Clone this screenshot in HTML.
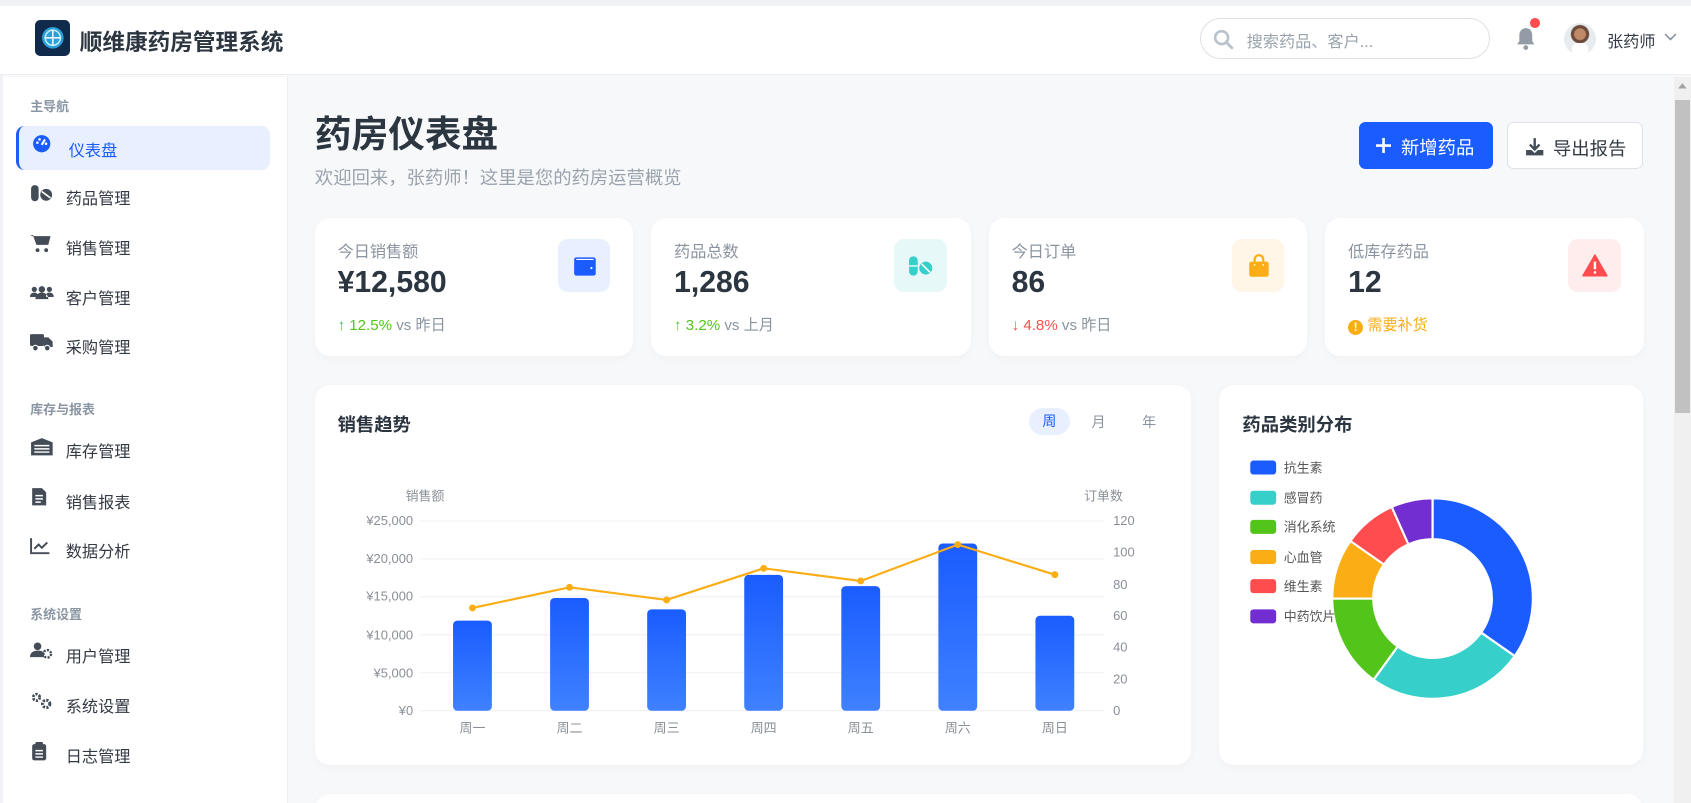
<!DOCTYPE html>
<html><head><meta charset="utf-8">
<style>
*{margin:0;padding:0;box-sizing:border-box}
html,body{width:1691px;height:803px;overflow:hidden;background:#f0f2f5}
body{font-family:"Liberation Sans","Noto Sans CJK SC",sans-serif;color:#2c3640}
#w{position:relative;width:1568px;height:745px;zoom:1.0785;overflow:hidden;background:#f7f8fa}
.a{position:absolute}
.hdr{left:0;top:6px;width:1568px;height:64px;background:#fff;border-bottom:1px solid #eceef2}
.side{left:3px;top:71px;width:264px;height:674px;background:#fff;border-right:1px solid #eceef2}
.sec{position:absolute;left:25px;font-size:12px;font-weight:bold;color:#8a96a3}
.it{position:absolute;left:13px;width:234px;height:41px;font-size:15px;color:#333a44}
.it svg{position:absolute;left:12px;top:7px}
.it span{position:absolute;left:45px;top:8px}
.act{background:#e8efff;border-left:3px solid #1a5cff;border-radius:8px;color:#1a5cff}
.card{position:absolute;background:#fff;border-radius:14px;box-shadow:0 2px 8px rgba(0,0,0,.03)}
.lab{position:absolute;left:21px;top:19px;font-size:15px;color:#8a94a0}
.val{position:absolute;left:21px;top:45px;font-size:28px;font-weight:bold;color:#2c3640}
.tr{position:absolute;left:21px;top:88px;font-size:14px;color:#8a94a0}
.ib{position:absolute;left:225px;top:20px;width:49px;height:49px;border-radius:9px}
.ib svg{position:absolute;left:13px;top:13px}
</style></head><body><div id="w">
<div class="a" style="left:0;top:0;width:1568px;height:6px;background:#f0f2f5"></div>
<div class="a" style="left:0;top:0;width:3px;height:745px;background:#f0f2f5"></div>
<div class="a hdr">
 <div class="a" style="left:32px;top:13px;width:33px;height:33px;background:#0f2a4a;border-radius:5px">
  <svg width="33" height="33"><circle cx="16.5" cy="16.5" r="10" fill="#2aa0d8"/><circle cx="16.5" cy="16.5" r="7" fill="none" stroke="#bfe6f6" stroke-width="1.5"/><path d="M16.5 9v15M9 16.5h15" stroke="#e8f6fc" stroke-width="1.5"/></svg>
 </div>
 <div class="a" style="left:74px;top:16px;font-size:21px;font-weight:bold;color:#2c3640">顺维康药房管理系统</div>
 <div class="a" style="left:1113px;top:11px;width:269px;height:38px;border:1px solid #dde1e6;border-radius:20px">
  <svg class="a" style="left:11px;top:9px" width="20" height="20"><circle cx="8" cy="8" r="6" fill="none" stroke="#b8c2cc" stroke-width="2.4"/><path d="M12.5 12.5l5 5" stroke="#b8c2cc" stroke-width="2.6" stroke-linecap="round"/></svg>
  <div class="a" style="left:42px;top:8px;font-size:15px;color:#9aa3ad">搜索药品、客户...</div>
 </div>
 <svg class="a" style="left:1405px;top:18px" width="20" height="24"><path d="M10 2c-4 0-6 3-6 7v5l-2 3h16l-2-3V9c0-4-2-7-6-7z" fill="#939ca6"/><circle cx="10" cy="20" r="2.2" fill="#939ca6"/></svg>
 <div class="a" style="left:1419px;top:11px;width:9px;height:9px;border-radius:50%;background:#ff4d4f"></div>
 <div class="a" style="left:1450px;top:15px;width:30px;height:30px;border-radius:50%;background:radial-gradient(circle at 50% 35%,#c08a6a 0 5px,#6b4a3a 6px 8px,#e8ecef 9px);overflow:hidden"><div class="a" style="left:8px;top:19px;width:14px;height:12px;background:#fff;border-radius:5px 5px 0 0"></div></div>
 <div class="a" style="left:1490px;top:20px;font-size:15px;color:#333a44">张药师</div>
 <svg class="a" style="left:1543px;top:25px" width="12" height="8"><path d="M1 1l5 5 5-5" fill="none" stroke="#8a94a0" stroke-width="1.5"/></svg>
</div>

<div class="a side">
 <div class="sec" style="top:18px">主导航</div>
 <div class="it act" style="top:46px;left:12px;width:235px"><svg width="18" height="18" style="left:12px"><circle cx="9" cy="9" r="8" fill="#1a5cff"/><path d="M9 10l3-5" stroke="#fff" stroke-width="2"/><circle cx="5" cy="8" r="1.2" fill="#fff"/><circle cx="7" cy="5" r="1.2" fill="#fff"/><circle cx="13" cy="9" r="1.2" fill="#fff"/></svg><span style="left:46px;top:10px">仪表盘</span></div>
 <div class="it" style="top:93px"><svg width="22" height="18"><rect x="1" y="1" width="7" height="15" rx="3.5" fill="#444c57"/><circle cx="15" cy="10" r="5.5" fill="#444c57"/><path d="M11 7l8 6" stroke="#fff" stroke-width="1.5"/></svg><span>药品管理</span></div>
 <div class="it" style="top:139px"><svg width="20" height="18"><path d="M0 1h3l3 9h10l2-7H5" fill="#444c57"/><path d="M3 2h16l-2 8H6z" fill="#444c57"/><circle cx="7" cy="15" r="1.8" fill="#444c57"/><circle cx="15" cy="15" r="1.8" fill="#444c57"/></svg><span>销售管理</span></div>
 <div class="it" style="top:185px"><svg width="22" height="18"><circle cx="11" cy="5" r="3" fill="#444c57"/><circle cx="4" cy="5" r="2.4" fill="#444c57"/><circle cx="18" cy="5" r="2.4" fill="#444c57"/><path d="M5 14c0-4 3-6 6-6s6 2 6 6z M0 12c0-3 2-4 4-4s3 1 3 2v2z M22 12c0-3-2-4-4-4s-3 1-3 2v2z" fill="#444c57"/></svg><span>客户管理</span></div>
 <div class="it" style="top:231px"><svg width="22" height="18"><rect x="0" y="1" width="13" height="11" rx="1.5" fill="#444c57"/><path d="M13 4h4l4 4v5h-8z" fill="#444c57"/><circle cx="5" cy="14" r="2.6" fill="#444c57" stroke="#fff" stroke-width="1"/><circle cx="16" cy="14" r="2.6" fill="#444c57" stroke="#fff" stroke-width="1"/></svg><span>采购管理</span></div>
 <div class="sec" style="top:299px">库存与报表</div>
 <div class="it" style="top:327px"><svg width="22" height="18"><path d="M1 5l10-4 10 4v12H1z" fill="#444c57"/><path d="M4 8h14M4 11h14M4 14h14" stroke="#fff" stroke-width="1.3"/></svg><span>库存管理</span></div>
 <div class="it" style="top:374px"><svg width="18" height="18"><path d="M2 1h9l4 4v12H2z" fill="#444c57"/><path d="M5 8h7M5 11h7M5 14h5" stroke="#fff" stroke-width="1.4"/></svg><span>销售报表</span></div>
 <div class="it" style="top:420px"><svg width="20" height="18"><path d="M1 1v14h17" fill="none" stroke="#444c57" stroke-width="1.8"/><path d="M4 11l4-4 3 3 5-5" fill="none" stroke="#444c57" stroke-width="1.8"/></svg><span>数据分析</span></div>
 <div class="sec" style="top:489px">系统设置</div>
 <div class="it" style="top:517px"><svg width="22" height="18"><circle cx="7" cy="4" r="3.5" fill="#444c57"/><path d="M0 14c0-4 3-6 7-6s5 1 6 2v4z" fill="#444c57"/><circle cx="16" cy="11" r="3.5" fill="none" stroke="#444c57" stroke-width="2.2" stroke-dasharray="2 1.2"/></svg><span>用户管理</span></div>
 <div class="it" style="top:564px"><svg width="22" height="18"><circle cx="6" cy="5" r="3" fill="none" stroke="#444c57" stroke-width="2.6" stroke-dasharray="2 1.2"/><circle cx="15" cy="11" r="3.4" fill="none" stroke="#444c57" stroke-width="2.8" stroke-dasharray="2 1.2"/></svg><span>系统设置</span></div>
 <div class="it" style="top:610px"><svg width="18" height="18"><rect x="2" y="2" width="13" height="15" rx="2" fill="#444c57"/><rect x="5" y="0" width="7" height="4" rx="1" fill="#444c57"/><path d="M5 8h7M5 11h7M5 14h7" stroke="#fff" stroke-width="1.3"/></svg><span>日志管理</span></div>
</div>

<div class="a" style="left:1552px;top:71px;width:16px;height:674px;background:#f0f0f0"></div>
<div class="a" style="left:1553px;top:93px;width:14px;height:290px;background:#c1c1c1"></div>
<svg class="a" style="left:1555px;top:76px" width="10" height="8"><path d="M5 1l4 5H1z" fill="#a3a3a3"/></svg>

<div class="a" style="left:292px;top:96px;font-size:34px;font-weight:bold;color:#2c3640">药房仪表盘</div>
<div class="a" style="left:292px;top:152px;font-size:17px;color:#9aa3ad">欢迎回来，张药师！这里是您的药房运营概览</div>
<div class="a" style="left:1260px;top:113px;width:124px;height:44px;background:#1a5cff;border-radius:6px;color:#fff;font-size:17px"><svg class="a" style="left:16px;top:15px" width="14" height="14"><path d="M7 0v14M0 7h14" stroke="#fff" stroke-width="2.4"/></svg><span class="a" style="left:39px;top:11px">新增药品</span></div>
<div class="a" style="left:1397px;top:113px;width:126px;height:44px;background:#fff;border:1px solid #dfe3e8;border-radius:6px;color:#333a44;font-size:17px"><svg class="a" style="left:16px;top:13px" width="18" height="18"><path d="M9 1v10M4.5 7L9 11.5 13.5 7" fill="none" stroke="#444c57" stroke-width="2.2"/><path d="M1 12v5h16v-5h-5l-3 3-3-3z" fill="#444c57"/></svg><span class="a" style="left:42px;top:11px">导出报告</span></div>

<div class="card" style="left:292px;top:202px;width:295px;height:128px">
 <div class="lab">今日销售额</div><div class="val">¥12,580</div>
 <div class="tr"><span style="color:#52c41a">↑ 12.5%</span> vs 昨日</div>
 <div class="ib" style="background:#e8efff"><svg width="24" height="24"><rect x="2" y="4" width="20" height="17" rx="2" fill="#1a5cff"/><path d="M4 6h16" stroke="#fff" stroke-width="1"/><circle cx="18" cy="14" r="1" fill="#fff"/></svg></div>
</div>
<div class="card" style="left:604px;top:202px;width:296px;height:128px">
 <div class="lab">药品总数</div><div class="val">1,286</div>
 <div class="tr"><span style="color:#52c41a">↑ 3.2%</span> vs 上月</div>
 <div class="ib" style="background:#e6f8f7"><svg width="24" height="24"><rect x="1" y="3" width="8" height="18" rx="4" fill="#36cfc9"/><path d="M1 12h8" stroke="#fff" stroke-width="1.2"/><circle cx="16.5" cy="14" r="6" fill="#36cfc9"/><path d="M12.5 10l8 8" stroke="#fff" stroke-width="1.5"/></svg></div>
</div>
<div class="card" style="left:917px;top:202px;width:295px;height:128px">
 <div class="lab">今日订单</div><div class="val">86</div>
 <div class="tr"><span style="color:#ff4d4f">↓ 4.8%</span> vs 昨日</div>
 <div class="ib" style="background:#fff6e8"><svg width="24" height="24"><path d="M8 9V6a4 4 0 0 1 8 0v3" fill="none" stroke="#faad14" stroke-width="2"/><rect x="3" y="8" width="18" height="14" rx="2" fill="#faad14"/><circle cx="8" cy="11" r="0.8" fill="#fff"/><circle cx="16" cy="11" r="0.8" fill="#fff"/></svg></div>
</div>
<div class="card" style="left:1229px;top:202px;width:295px;height:128px">
 <div class="lab">低库存药品</div><div class="val">12</div>
 <div class="tr" style="color:#faad14"><span style="display:inline-block;width:14px;height:14px;border-radius:50%;background:#faad14;color:#fff;font-size:11px;text-align:center;line-height:14px;font-weight:bold;vertical-align:-1px">!</span> 需要补货</div>
 <div class="ib" style="background:#ffecec"><svg width="24" height="24"><path d="M12 2L23 21H1z" fill="#ff4d4f" stroke="#ff4d4f" stroke-linejoin="round" stroke-width="1.5"/><path d="M12 8v7" stroke="#fff" stroke-width="2.2"/><circle cx="12" cy="18" r="1.2" fill="#fff"/></svg></div>
</div>

<div class="card" style="left:292px;top:357px;width:812px;height:352px"></div>
<div class="a" style="left:313px;top:381px;font-size:17px;font-weight:bold">销售趋势</div>
<div class="a" style="left:954px;top:378px;width:38px;height:25px;border-radius:13px;background:#e8efff;color:#1a5cff;font-size:13px;text-align:center;line-height:25px">周</div>
<div class="a" style="left:1012px;top:382px;font-size:13px;color:#8a94a0">月</div>
<div class="a" style="left:1059px;top:382px;font-size:13px;color:#8a94a0">年</div>
<svg class="a" style="left:292px;top:357px" width="812" height="352" font-family="Liberation Sans,Noto Sans CJK SC,sans-serif">
 <defs><linearGradient id="g" x1="0" y1="0" x2="0" y2="1"><stop offset="0" stop-color="#1a5cff"/><stop offset="1" stop-color="#3f81ff"/></linearGradient></defs>
 <g stroke="#eef0f3" stroke-width="1">
  <line x1="98" x2="732" y1="126" y2="126"/><line x1="98" x2="732" y1="161.2" y2="161.2"/><line x1="98" x2="732" y1="196.4" y2="196.4"/><line x1="98" x2="732" y1="231.6" y2="231.6"/><line x1="98" x2="732" y1="266.8" y2="266.8"/><line x1="98" x2="732" y1="302" y2="302"/>
 </g>
 <g font-size="12" fill="#8a8f96" text-anchor="end">
  <text x="120" y="107">销售额</text>
  <text x="91" y="130">¥25,000</text><text x="91" y="165">¥20,000</text><text x="91" y="200">¥15,000</text><text x="91" y="236">¥10,000</text><text x="91" y="271">¥5,000</text><text x="91" y="306">¥0</text>
 </g>
 <g font-size="12" fill="#8a8f96">
  <text x="713" y="107">订单数</text>
  <text x="740" y="130">120</text><text x="740" y="159">100</text><text x="740" y="189">80</text><text x="740" y="218">60</text><text x="740" y="247">40</text><text x="740" y="277">20</text><text x="740" y="306">0</text>
 </g>
 <g fill="url(#g)">
  <rect x="128" y="218.5" width="36" height="83.5" rx="4"/>
  <rect x="218" y="197.5" width="36" height="104.5" rx="4"/>
  <rect x="308" y="208" width="36" height="94" rx="4"/>
  <rect x="398" y="176" width="36" height="126" rx="4"/>
  <rect x="488" y="186.5" width="36" height="115.5" rx="4"/>
  <rect x="578" y="147" width="36" height="155" rx="4"/>
  <rect x="668" y="214" width="36" height="88" rx="4"/>
 </g>
 <polyline fill="none" stroke="#faad14" stroke-width="2" points="146,206.7 236,187.6 326,199.3 416,170 506,181.7 596,148 686,175.9"/>
 <g fill="#faad14"><circle cx="146" cy="206.7" r="3.2"/><circle cx="236" cy="187.6" r="3.2"/><circle cx="326" cy="199.3" r="3.2"/><circle cx="416" cy="170" r="3.2"/><circle cx="506" cy="181.7" r="3.2"/><circle cx="596" cy="148" r="3.2"/><circle cx="686" cy="175.9" r="3.2"/></g>
 <g font-size="12" fill="#8a8f96" text-anchor="middle">
  <text x="146" y="322">周一</text><text x="236" y="322">周二</text><text x="326" y="322">周三</text><text x="416" y="322">周四</text><text x="506" y="322">周五</text><text x="596" y="322">周六</text><text x="686" y="322">周日</text>
 </g>
</svg>

<div class="card" style="left:1130px;top:357px;width:393px;height:352px"></div>
<div class="a" style="left:1152px;top:381px;font-size:17px;font-weight:bold">药品类别分布</div>
<svg class="a" style="left:1130px;top:357px" width="393" height="352" font-family="Liberation Sans,Noto Sans CJK SC,sans-serif">
 <g id="donut" transform="translate(198,198)" stroke="#fff" stroke-width="2" stroke-linejoin="round"></g>
 <g font-size="12" fill="#555">
  <rect x="29" y="70" width="24" height="13" rx="3" fill="#1a5cff"/><text x="60" y="81">抗生素</text>
  <rect x="29" y="98" width="24" height="13" rx="3" fill="#36cfc9"/><text x="60" y="109">感冒药</text>
  <rect x="29" y="125" width="24" height="13" rx="3" fill="#52c41a"/><text x="60" y="136">消化系统</text>
  <rect x="29" y="153" width="24" height="13" rx="3" fill="#faad14"/><text x="60" y="164">心血管</text>
  <rect x="29" y="180" width="24" height="13" rx="3" fill="#ff4d4f"/><text x="60" y="191">维生素</text>
  <rect x="29" y="208" width="24" height="13" rx="3" fill="#722ed1"/><text x="60" y="219">中药饮片</text>
 </g>
</svg>
<div class="card" style="left:292px;top:736px;width:1231px;height:40px"></div>
</div>
<script>
(function(){
var g=document.getElementById('donut'),R=93,r=55;
var segs=[[0,125,'#1a5cff'],[125,216,'#36cfc9'],[216,270,'#52c41a'],[270,305,'#faad14'],[305,336,'#ff4d4f'],[336,360,'#722ed1']];
function p(a,rad){a=(a-90)*Math.PI/180;return [(rad*Math.cos(a)).toFixed(2),(rad*Math.sin(a)).toFixed(2)];}
segs.forEach(function(s){var l=(s[1]-s[0])>180?1:0;var a=p(s[0],R),b=p(s[1],R),c=p(s[1],r),d=p(s[0],r);
var path=document.createElementNS('http://www.w3.org/2000/svg','path');
path.setAttribute('d','M'+a+' A'+R+' '+R+' 0 '+l+' 1 '+b+' L'+c+' A'+r+' '+r+' 0 '+l+' 0 '+d+' Z');
path.setAttribute('fill',s[2]);g.appendChild(path);});
})();
</script>
</body></html>
